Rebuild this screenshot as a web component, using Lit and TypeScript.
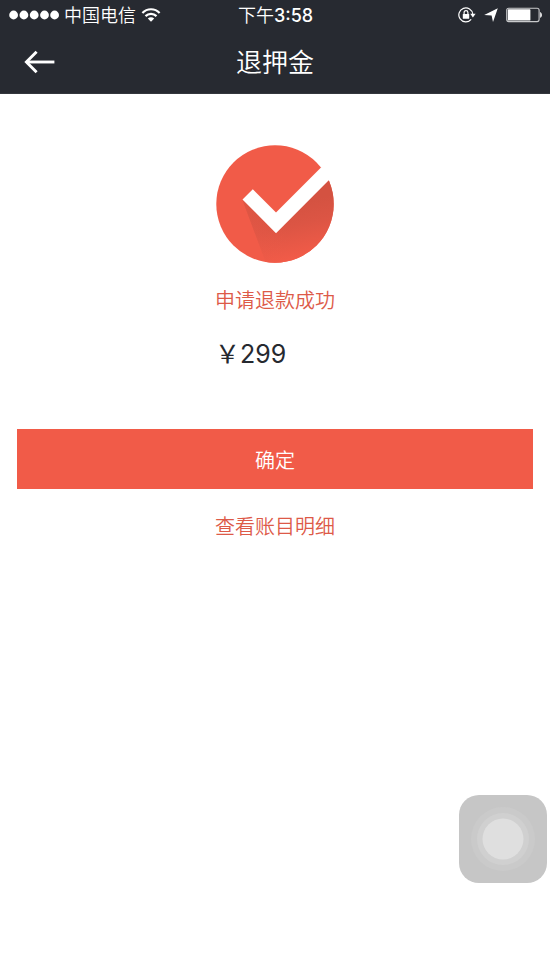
import { LitElement, html, svg, css } from "lit";
import { customElement, property } from "lit/decorators.js";

const signalDot = (x: number) => svg`<circle cx=${x} cy="5" r="4.4" />`;

@customElement("status-bar")
class StatusBar extends LitElement {
  @property() period = "";
  @property() time = "";
  @property() carrier = "";

  static styles = css`
    :host {
      display: grid;
      grid-template-columns: 1fr auto 1fr;
      align-items: center;
      height: 30px;
      padding: 0 8px 0 9px;
      font-size: 18px;
      line-height: 28px;
    }
    .side {
      display: flex;
      align-items: center;
    }
    .left {
      gap: 5px;
    }
    .right {
      justify-content: flex-end;
      gap: 8px;
    }
    .carrier,
    .time {
      padding-top: 2px;
    }
    .clock {
      font-weight: 500;
    }
    svg {
      display: block;
      flex: none;
    }
  `;

  render() {
    return html`
      <div class="side left">
        <svg width="50" height="10" viewBox="0 0 50 10" fill="#fff" role="img" aria-label="信号">
          ${[4.6, 14.9, 25.2, 35.5, 45.6].map(signalDot)}
        </svg>
        <span class="carrier">${this.carrier}</span>
        <svg width="20" height="14" viewBox="0 0 20 14" fill="none" stroke="#fff" stroke-width="2.2" role="img" aria-label="Wi-Fi">
          <path d="M1.4 4.9C6.2 0 13.8 0 18.6 4.9" />
          <path d="M4.5 8.1C7.6 5 12.4 5 15.5 8.1" />
          <path d="M10 13.8L6.8 10.6C8.6 8.9 11.4 8.9 13.2 10.6Z" fill="#fff" stroke="none" />
        </svg>
      </div>
      <div class="time">${this.period}<span class="clock">${this.time}</span></div>
      <div class="side right">
        <svg width="18" height="16" viewBox="0 0 18 16" role="img" aria-label="方向锁定">
          <path d="M13.2 12.4A7 7 0 1 1 14.8 7.2" fill="none" stroke="#fff" stroke-width="1.2" />
          <path d="M12.2 6.8H17.6L14.9 10.4Z" fill="#fff" />
          <rect x="4.8" y="7" width="6.4" height="4.8" rx="0.5" fill="#fff" />
          <path d="M6.1 7.5V5.5A1.9 1.9 0 0 1 9.9 5.5V7.5" fill="none" stroke="#fff" stroke-width="1.2" />
        </svg>
        <svg width="14" height="14" viewBox="0 0 14 14" fill="#fff" role="img" aria-label="定位">
          <path d="M13.8 0.2L9 14L7.6 7.4L0.2 7Z" />
        </svg>
        <svg width="36" height="16" viewBox="0 0 36 16" role="img" aria-label="电池">
          <rect x="0.7" y="1.2" width="32.4" height="13.4" rx="2" fill="none" stroke="#c9cacc" stroke-width="1.1" />
          <rect x="1.8" y="2.3" width="22.6" height="11.2" rx="0.6" fill="#fff" />
          <path d="M34.2 5C36.4 5.8 36.4 10 34.2 10.8Z" fill="#fff" />
        </svg>
      </div>
    `;
  }
}

@customElement("success-mark")
class SuccessMark extends LitElement {
  static styles = css`
    svg {
      display: block;
    }
  `;

  render() {
    return html`
      <svg width="118" height="118" viewBox="0 0 118 118" aria-hidden="true">
        <defs>
          <clipPath id="disc"><circle cx="59" cy="59" r="58.7" /></clipPath>
          <linearGradient id="shade" gradientUnits="userSpaceOnUse" x1="72" y1="60" x2="84" y2="112">
            <stop offset="0" stop-color="#d45241" />
            <stop offset="0.4" stop-color="#dc5544" />
            <stop offset="1" stop-color="#f15b48" />
          </linearGradient>
          <linearGradient id="fade" gradientUnits="userSpaceOnUse" x1="26" y1="0" x2="70" y2="0">
            <stop offset="0" stop-color="#f15b48" stop-opacity="0.4" />
            <stop offset="1" stop-color="#f15b48" stop-opacity="0" />
          </linearGradient>
        </defs>
        <g clip-path="url(#disc)">
          <rect width="118" height="118" fill="#f15b48" />
          <path d="M26.5 55L50 118H118V32L60 70Z" fill="url(#shade)" />
          <path d="M26.5 55L50 118H118V32L60 70Z" fill="url(#fade)" />
        </g>
        <path d="M26.5 54.5L36.8 44.2L60 67.4L105 22.4L118 30L60 88.2Z" fill="#fff" />
      </svg>
    `;
  }
}

@customElement("app-root")
class AppRoot extends LitElement {
  static styles = css`
    :host {
      display: block;
      min-height: 100vh;
      background: #fff;
      color: #26292f;
      font-family: Inter, "Noto Sans CJK SC", sans-serif;
      font-weight: 350;
    }
    .top {
      background: #272a31;
      border-bottom: 1px solid #34373d;
      color: #fff;
    }
    .nav {
      display: grid;
      grid-template-columns: 1fr auto 1fr;
      align-items: center;
      height: 63px;
      padding: 0 24px;
    }
    .back {
      justify-self: start;
      padding: 0;
      border: 0;
      background: none;
      cursor: pointer;
    }
    .back svg,
    .touch svg {
      display: block;
    }
    h1 {
      margin: 0;
      padding-top: 2px;
      font-size: 26px;
      line-height: 40px;
      font-weight: 350;
    }
    main {
      display: flex;
      flex-direction: column;
      align-items: center;
      padding: 51px 17px 0;
    }
    .result {
      padding-top: 23px;
    }
    p {
      margin: 0;
    }
    .message {
      color: #dd5a48;
      font-size: 20px;
      line-height: 30px;
    }
    .amount {
      margin-top: 20px;
      font-size: 25px;
      line-height: 36px;
      font-weight: 400;
    }
    .confirm {
      align-self: stretch;
      height: 60px;
      margin-top: 57px;
      border: 0;
      border-radius: 0;
      background: #f15b48;
      color: #fff;
      font: inherit;
      font-size: 20px;
      cursor: pointer;
    }
    .detail {
      margin-top: 23px;
      color: #dd5a48;
      font-size: 20px;
      line-height: 30px;
      text-decoration: none;
    }
    .touch {
      position: fixed;
      right: 3px;
      bottom: 95px;
      padding: 0;
      border: 0;
      border-radius: 20px;
      background: #c6c6c6;
      cursor: pointer;
    }
  `;

  render() {
    return html`
      <header class="top">
        <status-bar carrier="中国电信" period="下午" time="3:58"></status-bar>
        <div class="nav">
          <button class="back" aria-label="返回">
            <svg width="32" height="24" viewBox="0 0 32 24" fill="none" stroke="#fff" stroke-width="2.9">
              <path d="M30.4 12H2.5" />
              <path d="M12.6 1.8L2.4 12L12.6 22.2" />
            </svg>
          </button>
          <h1>退押金</h1>
        </div>
      </header>
      <main>
        <success-mark></success-mark>
        <div class="result">
          <p class="message">申请退款成功</p>
          <p class="amount">￥299</p>
        </div>
        <button class="confirm">确定</button>
        <a class="detail" href="#detail">查看账目明细</a>
      </main>
      <button class="touch" aria-label="辅助触控">
        <svg width="88" height="88" viewBox="0 0 88 88">
          <circle cx="44" cy="44" r="32" fill="#cacaca" />
          <circle cx="44" cy="44" r="26" fill="#d0d0d0" />
          <circle cx="44" cy="44" r="20.5" fill="#dfdfdf" />
        </svg>
      </button>
    `;
  }
}
